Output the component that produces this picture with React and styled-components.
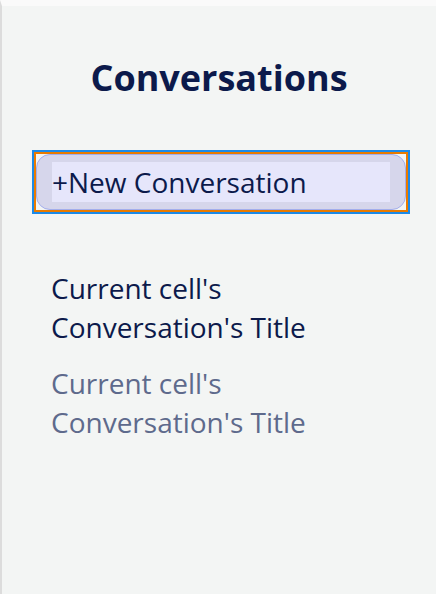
import React from "react";
import styled, { createGlobalStyle } from "styled-components";

const GlobalStyle = createGlobalStyle`
  html, body {
    margin: 0;
    padding: 0;
    background: #f3f5f4;
  }
  body {
    font-family: "Open Sans", "Liberation Sans", sans-serif;
  }
`;

const Panel = styled.div`
  box-sizing: border-box;
  height: 594px;
  border-left: 2px solid #dcdcdc;
  border-top: 6px solid #fafafa;
  background: #f3f5f4;
  display: flex;
  flex-direction: column;
`;

const Title = styled.h1`
  margin: 47px 0 0;
  font-size: 36px;
  font-weight: 700;
  line-height: 50px;
  color: #0c1a4b;
  text-align: center;
`;

const Focus = styled.div`
  box-sizing: border-box;
  height: 64px;
  margin: 47px 26px 0 30px;
  border: 2px solid #1c8ae8;
  display: flex;
`;

const NewButton = styled.button`
  flex: 1;
  box-sizing: border-box;
  margin: 0;
  padding: 0;
  border: 2px solid #e97b00;
  border-radius: 0;
  background: #f3f5f4;
  display: flex;
  align-items: stretch;
  cursor: pointer;
  font: inherit;
`;

const Pill = styled.span`
  flex: 1;
  display: flex;
  align-items: stretch;
  border-radius: 14px;
  border: 1px solid #a3aeec;
  background: #d6d6eb;
  padding: 7px 15px;
`;

const Label = styled.span`
  flex: 1;
  display: flex;
  align-items: center;
  background: #e6e6fb;
  font-size: 28px;
  color: #0c1a4b;
  white-space: nowrap;
`;

const List = styled.ul`
  list-style: none;
  margin: 55px 0 0;
  padding: 0 0 0 49px;
  display: flex;
  flex-direction: column;
  gap: 18px;
`;

const Item = styled.li`
  font-size: 28px;
  line-height: 38.5px;
  color: ${(p) => (p.$active ? "#0c1a4b" : "#5e6a8c")};
  width: 320px;
`;

const conversations = [
  { id: 1, title: "Current cell's Conversation's Title", active: true },
  { id: 2, title: "Current cell's Conversation's Title", active: false },
];

export default function App() {
  return (
    <>
      <GlobalStyle />
      <Panel>
        <Title>Conversations</Title>
        <Focus>
          <NewButton type="button">
            <Pill>
              <Label>+New Conversation</Label>
            </Pill>
          </NewButton>
        </Focus>
        <List>
          {conversations.map((c) => (
            <Item key={c.id} $active={c.active}>
              {c.title}
            </Item>
          ))}
        </List>
      </Panel>
    </>
  );
}
